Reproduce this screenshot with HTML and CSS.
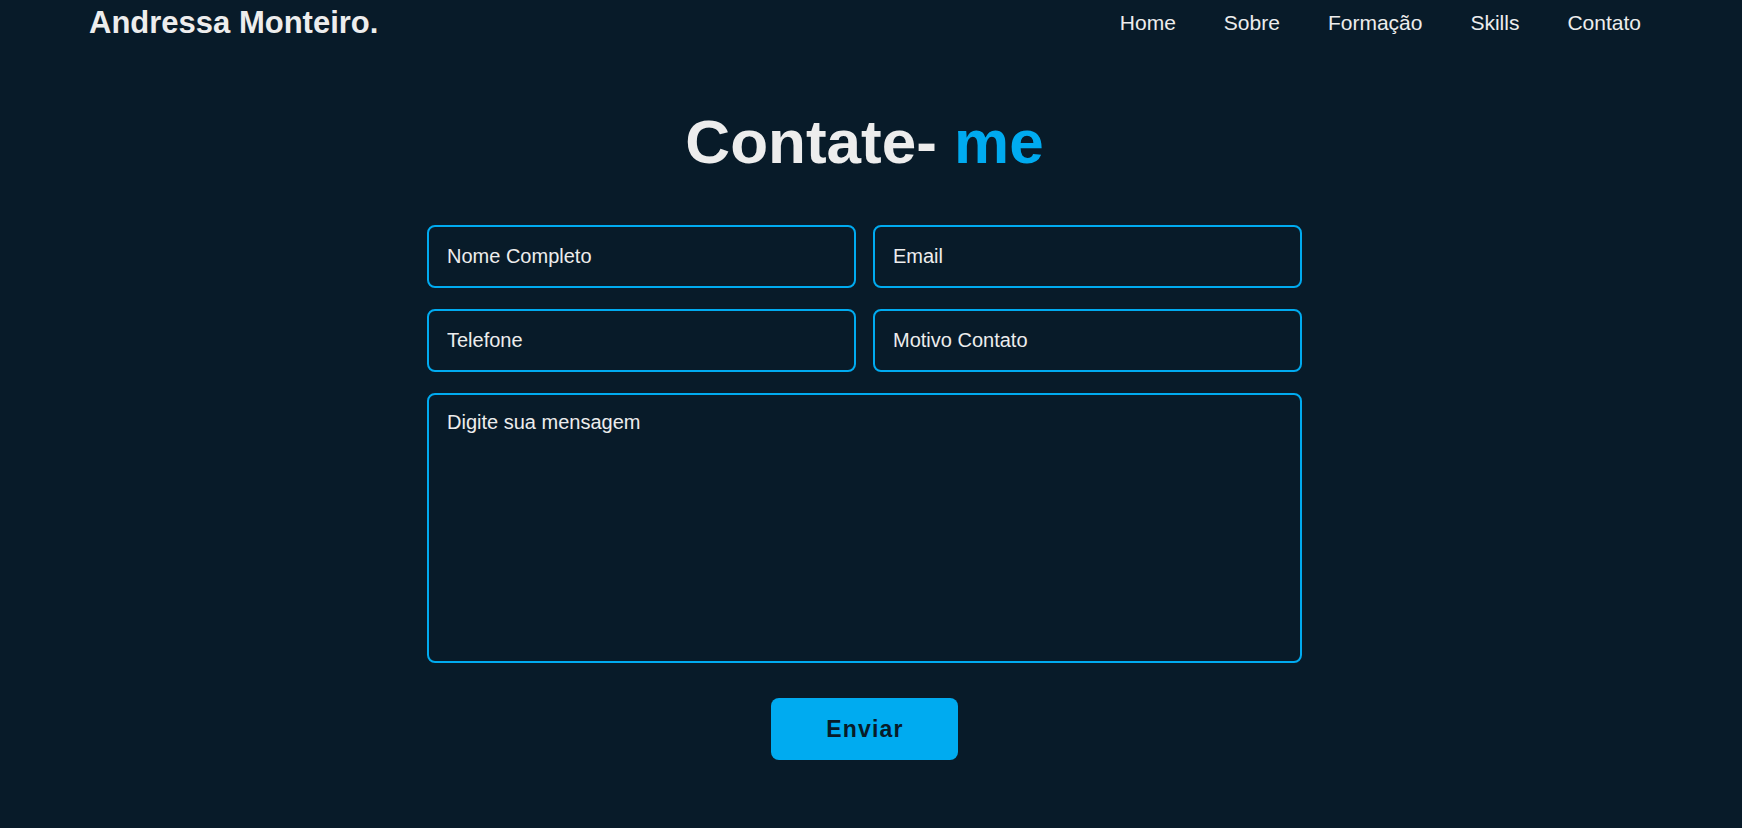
FILE: index.html
```html
<!DOCTYPE html>
<html lang="pt-BR">
<head>
<meta charset="utf-8">
<title>Andressa Monteiro - Contato</title>
<link rel="stylesheet" href="styles.css">
</head>
<body>
<header class="header">
  <a class="logo" href="#">Andressa Monteiro.</a>
  <nav class="nav">
    <a href="#">Home</a>
    <a href="#">Sobre</a>
    <a href="#">Formação</a>
    <a href="#">Skills</a>
    <a href="#">Contato</a>
  </nav>
</header>
<main class="contact">
  <h2 class="title">Contate- <span>me</span></h2>
  <form class="form">
    <div class="row">
      <input type="text" placeholder="Nome Completo">
      <input type="email" placeholder="Email">
    </div>
    <div class="row">
      <input type="tel" placeholder="Telefone">
      <input type="text" placeholder="Motivo Contato">
    </div>
    <textarea placeholder="Digite sua mensagem"></textarea>
    <button type="submit" class="btn">Enviar</button>
  </form>
</main>
</body>
</html>
```
FILE: styles.css
```css
* { box-sizing: border-box; margin: 0; padding: 0; }
html, body { background: #081b29; height: 100%; }
body {
  font-family: "Liberation Sans", Arial, sans-serif;
  color: #ededed;
}
a { text-decoration: none; color: #ededed; }

.header {
  display: flex;
  align-items: flex-start;
  justify-content: space-between;
  padding: 5px 101px 0 89px;
}
.logo {
  font-size: 31px;
  font-weight: 700;
  line-height: 35px;
}
.nav {
  display: flex;
  gap: 48px;
  padding-top: 6px;
}
.nav a {
  font-size: 21px;
  line-height: 24px;
}

.contact {
  width: 875px;
  margin-left: 427px;
  display: flex;
  flex-direction: column;
}
.title {
  margin-top: 67px;
  font-size: 62px;
  line-height: 70px;
  font-weight: 700;
  text-align: center;
}
.title span { color: #00abf0; }

.form {
  margin-top: 48px;
  display: flex;
  flex-direction: column;
  gap: 21px;
}
.row {
  display: flex;
  gap: 17px;
}
input, textarea {
  font-family: "Liberation Sans", Arial, sans-serif;
  font-size: 20px;
  line-height: 23px;
  color: #ededed;
  background: transparent;
  border: 2px solid #00abf0;
  border-radius: 8px;
  padding: 18px 18px;
  outline: none;
}
input { flex: 1; min-width: 0; height: 63px; }
textarea {
  height: 270px;
  resize: none;
  padding: 16px 18px;
}
::placeholder { color: #ededed; opacity: 1; }

.btn {
  align-self: center;
  margin-top: 14px;
  width: 187px;
  height: 62px;
  border: none;
  border-radius: 8px;
  background: #00abf0;
  color: #081b29;
  font-family: "Liberation Sans", Arial, sans-serif;
  font-size: 23px;
  font-weight: 700;
  letter-spacing: 1.2px;
  padding-left: 1px;
  cursor: pointer;
}
```
